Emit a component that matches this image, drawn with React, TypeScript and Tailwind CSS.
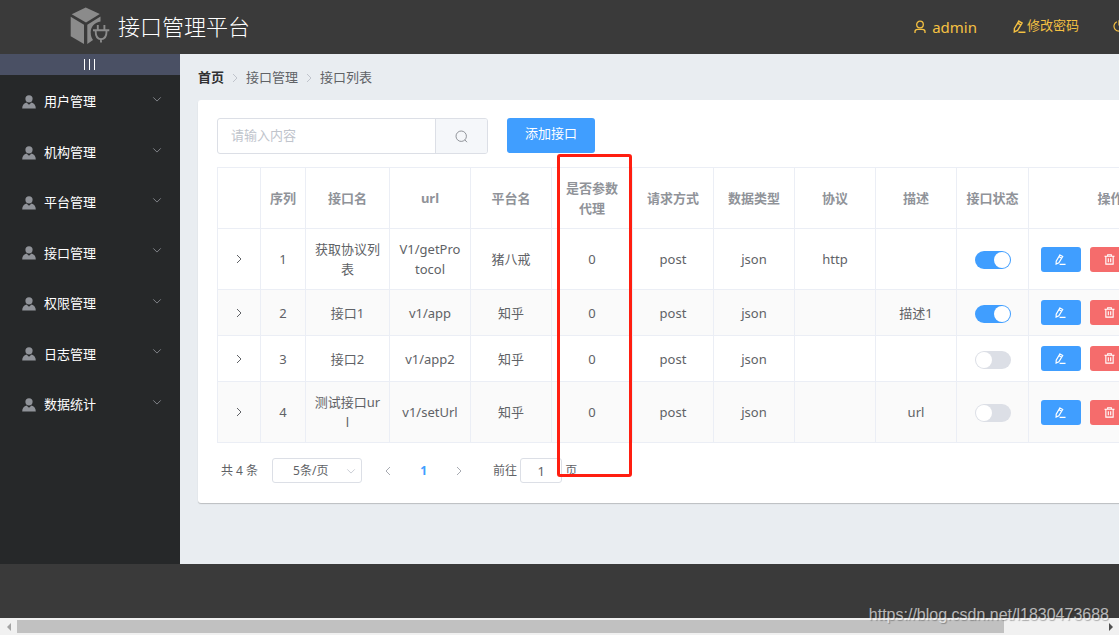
import { useState } from "react"

const menus = ["用户管理", "机构管理", "平台管理", "接口管理", "权限管理", "日志管理", "数据统计"]

const columns = [
  { title: "", width: "w-[43px]" },
  { title: "序列", width: "w-[45px]" },
  { title: "接口名", width: "w-[84px]" },
  { title: "url", width: "w-[81px]" },
  { title: "平台名", width: "w-[81px]" },
  { title: "是否参数代理", width: "w-[81px]" },
  { title: "请求方式", width: "w-[81px]" },
  { title: "数据类型", width: "w-[81px]" },
  { title: "协议", width: "w-[81px]" },
  { title: "描述", width: "w-[81px]" },
  { title: "接口状态", width: "w-[72px]" },
  { title: "操作", width: "w-[164px]" },
]

const initialRows = [
  { id: 1, name: "获取协议列表", url: "V1/getProtocol", platform: "猪八戒", proxy: 0, method: "post", type: "json", protocol: "http", desc: "", enabled: true },
  { id: 2, name: "接口1", url: "v1/app", platform: "知乎", proxy: 0, method: "post", type: "json", protocol: "", desc: "描述1", enabled: true },
  { id: 3, name: "接口2", url: "v1/app2", platform: "知乎", proxy: 0, method: "post", type: "json", protocol: "", desc: "", enabled: false },
  { id: 4, name: "测试接口url", url: "v1/setUrl", platform: "知乎", proxy: 0, method: "post", type: "json", protocol: "", desc: "url", enabled: false },
]

function Chevron({ dir = "right", className = "" }: { dir?: "right" | "left" | "down"; className?: string }) {
  const paths = {
    right: "M4 2 8 6 4 10",
    left: "M8 2 4 6 8 10",
    down: "M1.5 4 6 8.5 10.5 4",
  }
  return (
    <svg viewBox="0 0 12 12" fill="none" stroke="currentColor" className={className} aria-hidden="true">
      <path d={paths[dir]} />
    </svg>
  )
}

function EditIcon({ className = "" }: { className?: string }) {
  return (
    <svg viewBox="0 0 12 12" fill="none" stroke="currentColor" strokeWidth="1.3" className={className} aria-hidden="true">
      <path d="M5.4 1 8.4 2.8 4.2 9.6 1.2 11 1.3 7.8Z M4.4 2.9 7.3 4.6 M5 11.3H11.5" />
    </svg>
  )
}

function TrashIcon({ className = "" }: { className?: string }) {
  return (
    <svg viewBox="0 0 12 12" fill="none" stroke="currentColor" strokeWidth="1.2" className={className} aria-hidden="true">
      <path d="M0.5 2.5H11.5 M4 2.5V0.8H8V2.5 M2 2.5V11H10V2.5 M4.7 4.5V9 M7.3 4.5V9" />
    </svg>
  )
}

function SettingIcon({ className = "" }: { className?: string }) {
  return (
    <svg viewBox="0 0 12 12" fill="none" stroke="currentColor" className={className} aria-hidden="true">
      <path d="M6 1 10.3 3.5V8.5L6 11 1.7 8.5V3.5Z" />
      <circle cx="6" cy="6" r="1.8" />
    </svg>
  )
}

function Logo() {
  return (
    <svg viewBox="0 0 40 38" className="h-[38px] w-10 text-[#8b8b8b]" fill="currentColor" aria-hidden="true">
      <path d="M15.7.5 29.8 7 16 15.6 1.7 7.2Z" />
      <path d="M.7 9.8 14 17.8V37L.7 29.2Z" />
      <path d="M17.3 17.8 30.5 9.6V14.5C25 15.2 20.7 19.5 20.7 25.5C20.7 29 21.8 31.2 23 33L17.3 37Z" />
      <path
        d="M27.8 18V23M34.4 18V23M23 23.3H39.3M25.6 23.5C25.6 29.5 27 32.2 31 32.2S36.6 29.5 36.6 23.5M31 32V35.6"
        fill="none"
        stroke="currentColor"
        strokeWidth="1.9"
      />
    </svg>
  )
}

function Header() {
  return (
    <header className="flex h-[54px] shrink-0 items-center bg-[#3a3a3a] pb-0.5 pl-[70px] text-[#f5c142]">
      <Logo />
      <h1 className="ml-2 text-[22px] font-light text-white">接口管理平台</h1>
      <div className="ml-auto flex items-center pr-[104px]">
        <a href="#user" className="mr-9 flex items-center gap-1.5 pt-0.5 text-[15px]">
          <svg viewBox="0 0 12 14" className="h-3.5 w-3" fill="none" stroke="currentColor" strokeWidth="1.3" aria-hidden="true">
            <circle cx="6" cy="4.5" r="3.3" />
            <path d="M1 13V11.5C1 10 2.3 9.3 3.7 9.3H8.3C9.7 9.3 11 10 11 11.5V13" />
          </svg>
          admin
        </a>
        <a href="#password" className="mr-[34px] flex items-center gap-px text-[13px]">
          <EditIcon className="size-[13px]" />
          修改密码
        </a>
        <button aria-label="退出">
          <svg viewBox="0 0 12 12" className="size-3" fill="none" stroke="currentColor" strokeWidth="1.2" aria-hidden="true">
            <path d="M3.8 1.7A5 5 0 1 0 8.2 1.7M6 .3V5.5" />
          </svg>
        </button>
      </div>
    </header>
  )
}

function Sidebar() {
  return (
    <aside className="w-[180px] shrink-0 bg-[#262829] text-white">
      <button className="flex h-[21px] w-full items-center justify-center gap-1 bg-[#4a5064] pr-0.5" aria-label="折叠菜单">
        <span className="h-[11px] w-px bg-white" />
        <span className="h-[11px] w-px bg-white" />
        <span className="h-[11px] w-px bg-white" />
      </button>
      <nav className="grid h-[355px] grid-rows-7 pt-0.5">
        {menus.map((menu) => (
          <button key={menu} className="flex items-center pr-[18px] pl-[22px] text-[13px]">
            <svg viewBox="0 0 14 14" className="h-3.5 w-3.5 text-[#909399]" fill="currentColor" aria-hidden="true">
              <circle cx="7" cy="3.8" r="3.6" />
              <path d="M4.5 7.5 7 9.8 9.5 7.5C12 8.3 13.8 10 13.8 13.6H.2C.2 10 2 8.3 4.5 7.5Z" />
            </svg>
            <span className="ml-2">{menu}</span>
            <Chevron dir="down" className="mb-1.5 ml-auto size-2.5 text-[#909399]" />
          </button>
        ))}
      </nav>
    </aside>
  )
}

function Pagination() {
  return (
    <div className="mt-[15px] flex items-center pl-1 text-xs text-[#606266]">
      <span>共 4 条</span>
      <div className="relative ml-3.5">
        <select
          aria-label="每页条数"
          className="h-[25px] w-[90px] appearance-none rounded-[3px] border border-[#dcdfe6] bg-white pl-5 text-xs"
        >
          <option>5条/页</option>
          <option>10条/页</option>
        </select>
        <Chevron dir="down" className="pointer-events-none absolute top-2 right-1.5 size-2.5 text-[#c0c4cc]" />
      </div>
      <button className="ml-5 text-[#a8abb2]" aria-label="上一页">
        <Chevron dir="left" className="size-3" />
      </button>
      <button className="mx-6 w-[11px] font-bold text-[#409eff]">1</button>
      <button className="text-[#a8abb2]" aria-label="下一页">
        <Chevron className="size-3" />
      </button>
      <label htmlFor="page" className="ml-7">
        前往
      </label>
      <input
        id="page"
        defaultValue="1"
        className="mx-[3px] h-[25px] w-[42px] rounded-[3px] border border-[#dcdfe6] text-center text-[13px]"
      />
      <span>页</span>
    </div>
  )
}

function ApiTable() {
  const [rows, setRows] = useState(initialRows)

  const toggle = (id: number) =>
    setRows(rows.map((row) => (row.id === id ? { ...row, enabled: !row.enabled } : row)))

  return (
    <table className="mt-[13px] w-full table-fixed border-collapse text-center text-[13px] leading-5 break-all text-[#606266]">
      <thead className="text-[#909399]">
        <tr className="h-[61px]">
          {columns.map((col) => (
            <th key={col.title} className={`${col.width} border border-[#ebeef5] px-2 font-bold`}>
              {col.title}
            </th>
          ))}
        </tr>
      </thead>
      <tbody>
        {rows.map((row) => (
          <tr key={row.id} className="h-[46px] even:bg-[#fafafa]">
            <td className="border border-[#ebeef5]">
              <button className="block mx-auto text-[#606266]" aria-label="展开">
                <Chevron className="size-3" />
              </button>
            </td>
            <td className="border border-[#ebeef5] px-2">{row.id}</td>
            <td className="border border-[#ebeef5] px-2 py-2.5">{row.name}</td>
            <td className="border border-[#ebeef5] px-2 py-2.5">{row.url}</td>
            <td className="border border-[#ebeef5] px-2">{row.platform}</td>
            <td className="border border-[#ebeef5] px-2">{row.proxy}</td>
            <td className="border border-[#ebeef5] px-2">{row.method}</td>
            <td className="border border-[#ebeef5] px-2">{row.type}</td>
            <td className="border border-[#ebeef5] px-2">{row.protocol}</td>
            <td className="border border-[#ebeef5] px-2">{row.desc}</td>
            <td className="border border-[#ebeef5] pt-0.5">
              <input
                type="checkbox"
                role="switch"
                aria-label={`${row.name} 接口状态`}
                checked={row.enabled}
                onChange={() => toggle(row.id)}
                className="block mx-auto h-[18px] w-9 appearance-none rounded-full bg-[#dcdfe6] p-px before:block before:size-4 before:rounded-full before:bg-white checked:bg-[#409eff] checked:before:ml-[18px]"
              />
            </td>
            <td className="border border-[#ebeef5] pr-0.5">
              <div className="flex justify-center gap-[9px] text-white">
                <button className="flex h-[25px] w-10 items-center justify-center rounded-[3px] bg-[#409eff]" aria-label="编辑">
                  <EditIcon className="size-[11px]" />
                </button>
                <button className="flex h-[25px] w-10 items-center justify-center rounded-[3px] bg-[#f56c6c]" aria-label="删除">
                  <TrashIcon className="size-[11px]" />
                </button>
                <button className="flex h-[25px] w-10 items-center justify-center rounded-[3px] bg-[#e6a23c]" aria-label="设置">
                  <SettingIcon className="size-[11px]" />
                </button>
              </div>
            </td>
          </tr>
        ))}
      </tbody>
    </table>
  )
}

function Content() {
  return (
    <main className="min-w-0 flex-1 bg-[#e9edf1] px-[18px] pt-3.5 text-[13px]">
      <nav className="flex h-5 items-center text-[#606266]" aria-label="breadcrumb">
        <a href="#home" className="font-bold text-[#303133]">
          首页
        </a>
        <Chevron className="mx-[5px] size-3 text-[#c0c4cc]" />
        <a href="#api">接口管理</a>
        <Chevron className="mx-[5px] size-3 text-[#c0c4cc]" />
        <span>接口列表</span>
      </nav>

      <section className="relative mt-3 rounded-[3px] bg-white px-[19px] pt-[18px] pb-5 shadow-[0_1px_1px_rgba(0,0,0,0.2)]">
        <div className="flex items-start">
          <div className="flex h-9 w-[271px] overflow-hidden rounded-[3px] border border-[#dcdfe6]">
            <input
              aria-label="搜索"
              placeholder="请输入内容"
              className="min-w-0 flex-1 px-[13px] outline-none placeholder:text-[#c0c4cc]"
            />
            <button
              className="flex w-[52px] items-center justify-center border-l border-[#dcdfe6] bg-[#f5f7fa] text-[#909399]"
              aria-label="查询"
            >
              <svg viewBox="0 0 13 13" className="size-[13px]" fill="none" stroke="currentColor" aria-hidden="true">
                <circle cx="6.2" cy="6.2" r="5.2" />
                <path d="M9.8 9.8 12 12.2" />
              </svg>
            </button>
          </div>
          <button className="ml-[19px] h-[35px] w-[88px] rounded-[3px] bg-[#409eff] pb-1 text-white">添加接口</button>
        </div>
        <ApiTable />
        <Pagination />
        {/* highlight around the proxy column */}
        <div className="pointer-events-none absolute top-[54px] left-[359px] h-[323px] w-[75px] rounded-[3px] border-3 border-[#ff1e10]" />
      </section>
    </main>
  )
}

function ScrollBar() {
  return (
    <div className="flex h-[17px] shrink-0 items-center bg-[#f1f1f1]">
      <button className="flex w-[17px] justify-center text-[#a3a3a3]" aria-label="向左滚动">
        <svg viewBox="0 0 4 8" className="h-2 w-1" fill="currentColor" aria-hidden="true">
          <path d="M4 0V8L0 4Z" />
        </svg>
      </button>
      <div className="flex-1">
        <div className="h-[13px] w-[91%] bg-[#c1c1c1]" />
      </div>
      <button className="flex w-[17px] justify-center text-[#505050]" aria-label="向右滚动">
        <svg viewBox="0 0 4 8" className="h-2 w-1" fill="currentColor" aria-hidden="true">
          <path d="M0 0V8L4 4Z" />
        </svg>
      </button>
    </div>
  )
}

export default function App() {
  return (
    <div className="relative flex min-h-screen flex-col overflow-hidden font-['Noto_Sans','Noto_Sans_CJK_SC',sans-serif]">
      <div className="flex min-w-[1229px] flex-1 flex-col">
        <Header />
        <div className="flex flex-1">
          <Sidebar />
          <Content />
        </div>
        <footer className="h-[54px] shrink-0 bg-[#3a3a3a]" />
      </div>
      <ScrollBar />
      <span className="absolute right-2.5 bottom-2 font-['Liberation_Sans',sans-serif] text-base leading-6 text-white/65 [text-shadow:1px_1px_1px_rgba(0,0,0,0.3)]">
        https://blog.csdn.net/l1830473688
      </span>
    </div>
  )
}
